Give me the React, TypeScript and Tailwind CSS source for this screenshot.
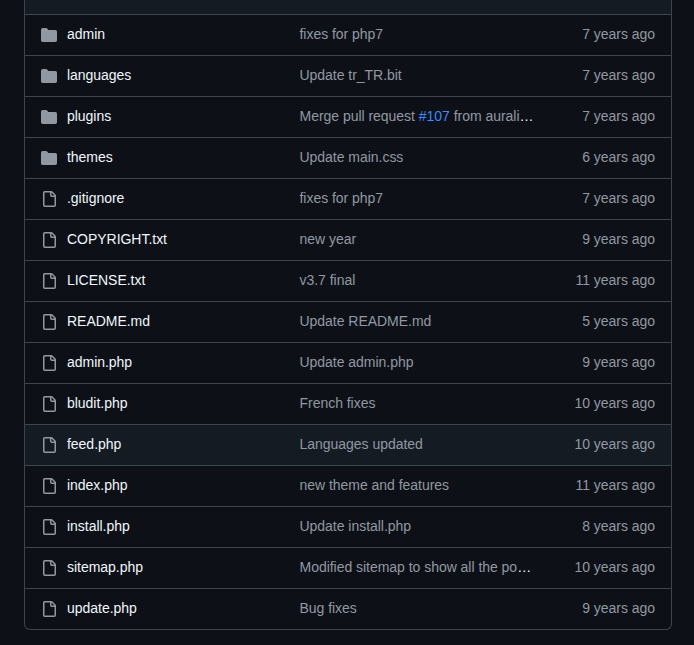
import React from "react";

type Entry = { name: string; dir?: boolean; message: React.ReactNode; age: string };

const Ellipsis = () => <span className="text-[#f0f6fc]">…</span>;

const entries: Entry[] = [
  { name: "admin", dir: true, message: "fixes for php7", age: "7 years ago" },
  { name: "languages", dir: true, message: "Update tr_TR.bit", age: "7 years ago" },
  {
    name: "plugins",
    dir: true,
    message: (
      <>
        Merge pull request <span className="text-[#388bfd]">#107</span> from aurali
        <Ellipsis />
      </>
    ),
    age: "7 years ago",
  },
  { name: "themes", dir: true, message: "Update main.css", age: "6 years ago" },
  { name: ".gitignore", message: "fixes for php7", age: "7 years ago" },
  { name: "COPYRIGHT.txt", message: "new year", age: "9 years ago" },
  { name: "LICENSE.txt", message: "v3.7 final", age: "11 years ago" },
  { name: "README.md", message: "Update README.md", age: "5 years ago" },
  { name: "admin.php", message: "Update admin.php", age: "9 years ago" },
  { name: "bludit.php", message: "French fixes", age: "10 years ago" },
  { name: "feed.php", message: "Languages updated", age: "10 years ago" },
  { name: "index.php", message: "new theme and features", age: "11 years ago" },
  { name: "install.php", message: "Update install.php", age: "8 years ago" },
  {
    name: "sitemap.php",
    message: (
      <>
        Modified sitemap to show all the po
        <Ellipsis />
      </>
    ),
    age: "10 years ago",
  },
  { name: "update.php", message: "Bug fixes", age: "9 years ago" },
];

function FolderIcon() {
  return (
    <svg viewBox="0 0 16 16" className="block size-4 shrink-0 fill-[#9198a1]">
      <path d="M1.75 1A1.75 1.75 0 0 0 0 2.75v10.5C0 14.216.784 15 1.75 15h12.5A1.75 1.75 0 0 0 16 13.25v-8.5A1.75 1.75 0 0 0 14.25 3H7.5a.25.25 0 0 1-.2-.1l-.9-1.2C6.07 1.26 5.55 1 5 1H1.75Z" />
    </svg>
  );
}

function FileIcon() {
  return (
    <svg viewBox="0 0 16 16" className="block size-4 shrink-0 fill-[#9198a1]">
      <path d="M2 1.75C2 .784 2.784 0 3.75 0h6.586c.464 0 .909.184 1.237.513l2.914 2.914c.329.328.513.773.513 1.237v9.586A1.75 1.75 0 0 1 13.25 16h-9.5A1.75 1.75 0 0 1 2 14.25Zm1.75-.25a.25.25 0 0 0-.25.25v12.5c0 .138.112.25.25.25h9.5a.25.25 0 0 0 .25-.25V6h-2.75A1.75 1.75 0 0 1 9 4.25V1.5Zm6.75.062V4.25c0 .138.112.25.25.25h2.688l-.011-.013-2.914-2.914-.013-.011Z" />
    </svg>
  );
}

export default function App() {
  return (
    <div className="h-[645px] overflow-hidden bg-[#0d1117] px-6 font-['Liberation_Sans',Arial,sans-serif] text-sm leading-5 tracking-[-0.03px] text-[#9198a1]">
      <div className="w-[648px] overflow-hidden rounded-b-md border-x border-b border-[#3d444d]">
        <div className="h-3.5 bg-[#151b23]" />
        {entries.map((entry) => (
          <div
            key={entry.name}
            className={`flex h-[41px] items-center border-t border-[#3d444d] px-4 pb-0.5 ${
              entry.name === "feed.php" ? "bg-[#151b23]" : ""
            }`}
          >
            <div className="mt-0.5">{entry.dir ? <FolderIcon /> : <FileIcon />}</div>
            <div className="ml-2.5 w-[232.5px] whitespace-nowrap text-[#f0f6fc]">{entry.name}</div>
            <div className="flex-1 whitespace-nowrap">{entry.message}</div>
            <div className="whitespace-nowrap text-right">{entry.age}</div>
          </div>
        ))}
      </div>
    </div>
  );
}
